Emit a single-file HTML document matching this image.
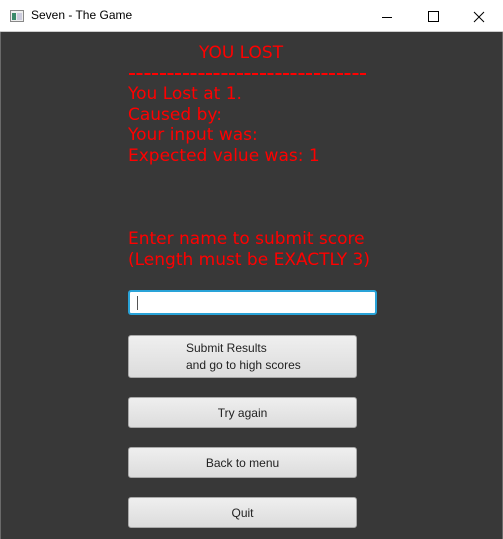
<!DOCTYPE html><html><head><style>
body{margin:0;width:503px;height:539px;background:#383838;position:relative;overflow:hidden;font-family:"DejaVu Sans","Liberation Sans",sans-serif}
.tb{position:absolute;left:0;top:0;width:503px;height:32px;background:#fff;border-bottom:1px solid #ccc;box-sizing:border-box}
.tb .t{position:absolute;left:31px;top:8px;font:12px "Liberation Sans",sans-serif;color:#000}
.r{position:absolute;color:#f00;font-size:17px;white-space:pre;line-height:20.5px}
.b{position:absolute;left:128px;width:229px;background:linear-gradient(#efefef,#dcdcdc);border:1px solid #a8a8a8;border-radius:3px;box-sizing:border-box;font:12px "Liberation Sans",sans-serif;color:#222;display:flex;align-items:center;justify-content:center}
.edge{position:absolute;top:32px;width:1px;height:507px;background:#6a6a6a}
</style></head><body>
<div class="tb"><svg style="position:absolute;left:10px;top:10px" width="14" height="12"><rect x=".5" y=".5" width="13" height="11" fill="#eee" stroke="#888"/><rect x="2" y="3" width="4" height="7" fill="#3a8a6a"/><rect x="7" y="3" width="5" height="7" fill="#ccd"/></svg><span class="t">Seven - The Game</span>
<svg style="position:absolute;left:380px;top:10px" width="110" height="14"><line x1="2" y1="7.5" x2="12" y2="7.5" stroke="#000"/><rect x="48.5" y="1.5" width="10" height="10" fill="none" stroke="#000"/><path d="M94 2L104 12M104 2L94 12" stroke="#000"/></svg></div>
<div class="edge" style="left:0"></div><div class="edge" style="left:502px"></div>
<div class="r" style="left:199px;top:43px">YOU LOST</div>
<div style="position:absolute;left:129px;top:73px;width:237px;height:2px;background:repeating-linear-gradient(90deg,#f00 0 6px,transparent 6px 7.7px)"></div>
<div class="r" style="left:128px;top:84px">You Lost at 1.
Caused by:
Your input was:
Expected value was: 1</div>
<div class="r" style="left:128px;top:229px">Enter name to submit score
(Length must be EXACTLY 3)</div>
<div style="position:absolute;left:128px;top:290px;width:249px;height:25px;background:#fff;border:2px solid #29a3d8;border-radius:3px;box-sizing:border-box"><div style="position:absolute;left:7px;top:4px;width:1px;height:14px;background:#555"></div></div>
<div class="b" style="top:335px;height:43px;justify-content:flex-start;padding-left:57px;line-height:17px">Submit Results<br>and go to high scores</div>
<div class="b" style="top:397px;height:31px">Try again</div>
<div class="b" style="top:447px;height:31px">Back to menu</div>
<div class="b" style="top:497px;height:31px">Quit</div>
</body></html>
